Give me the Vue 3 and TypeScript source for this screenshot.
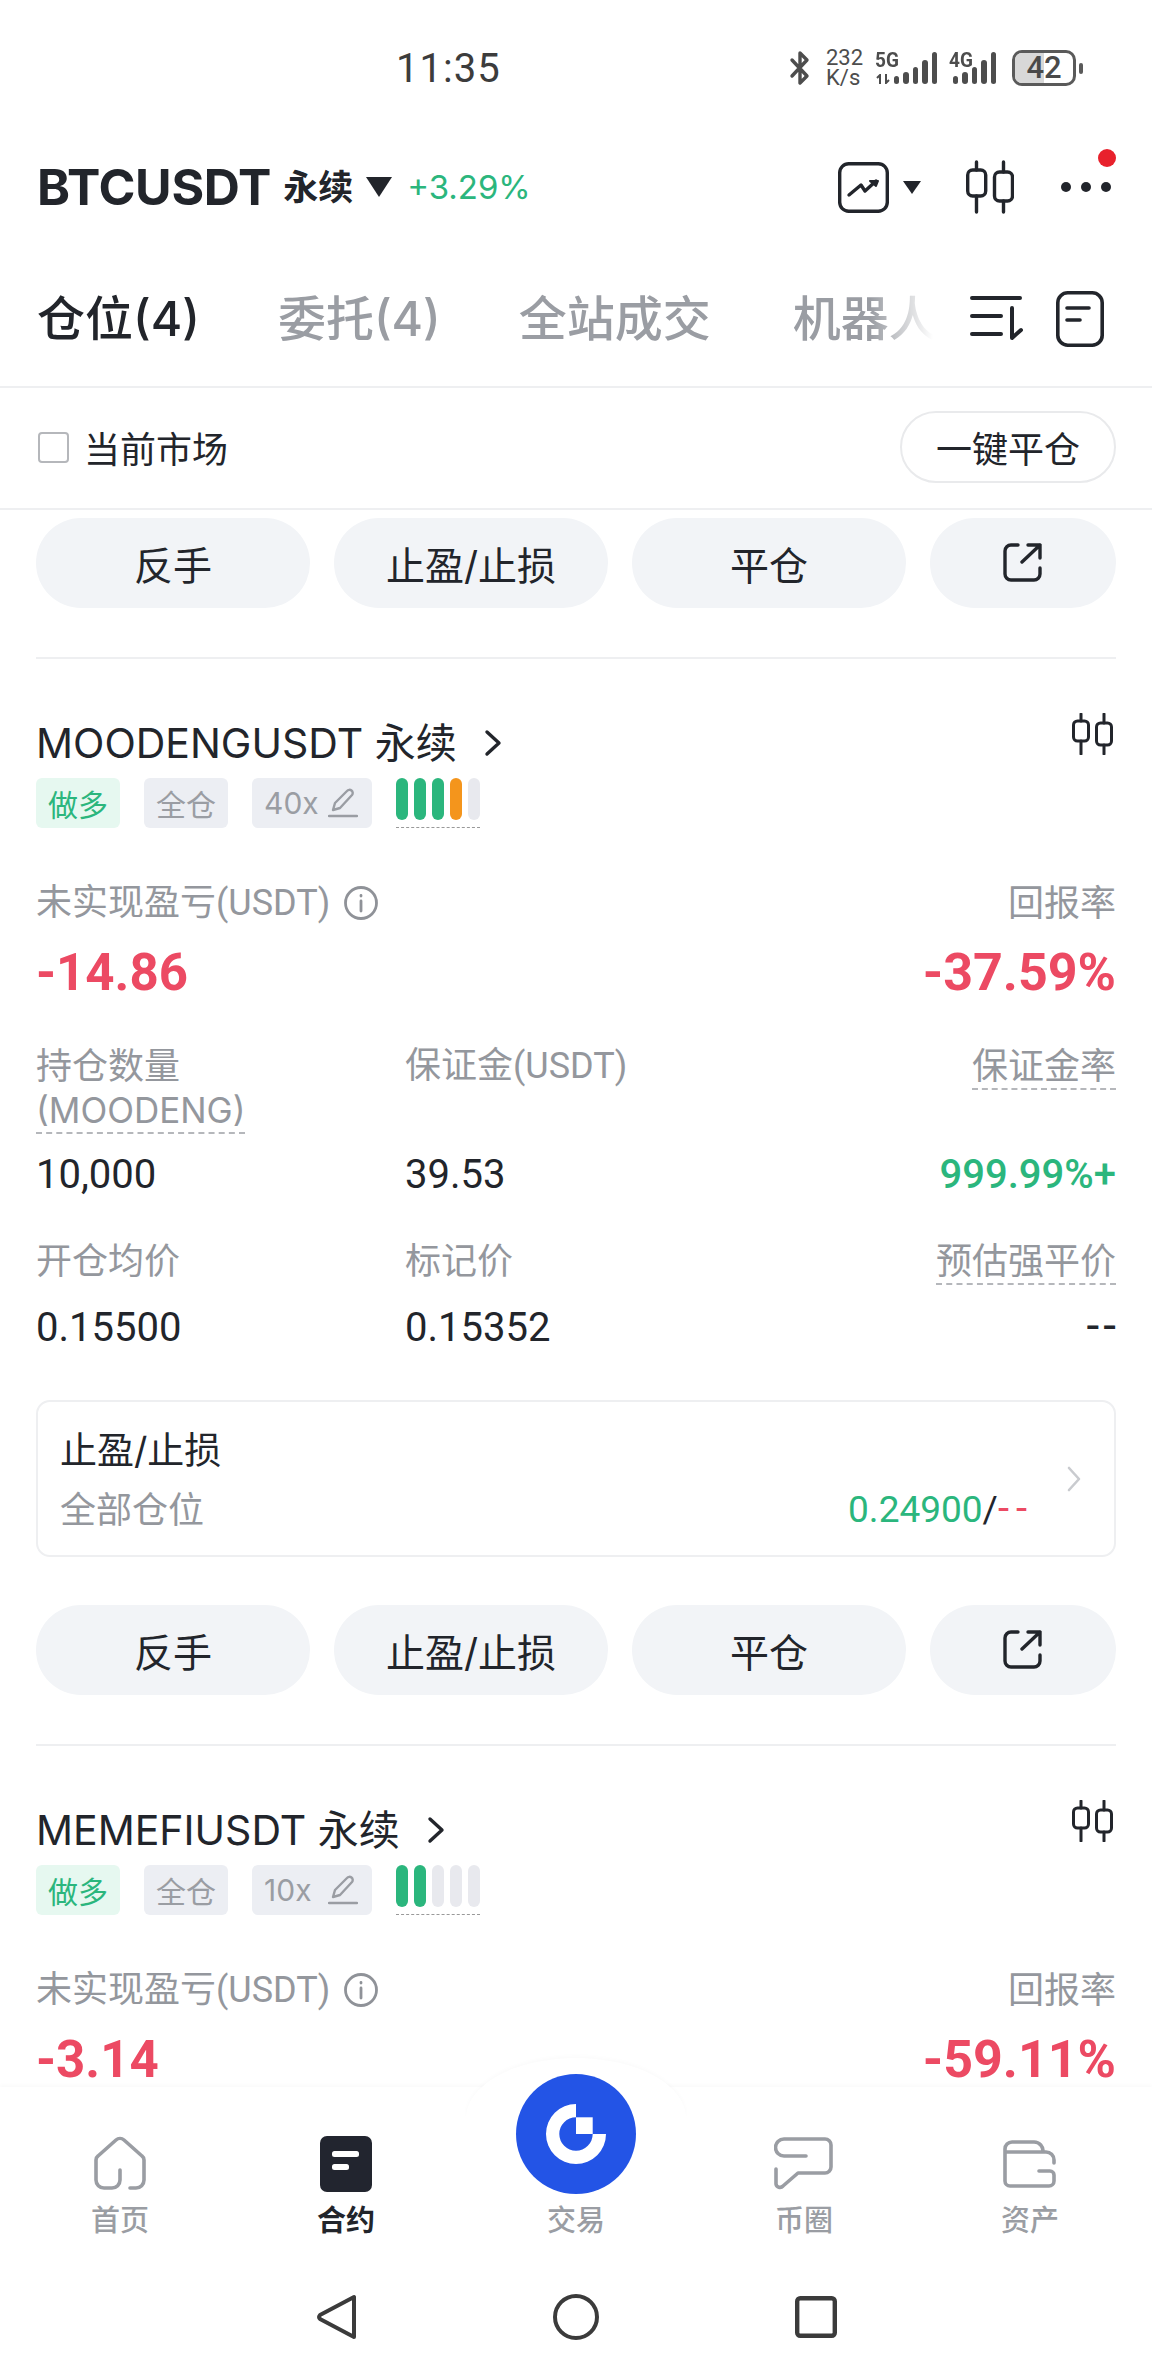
<script setup lang="ts">
// Futures positions screen: first action row is the tail of a scrolled-off card.
interface Position {
  symbol: string
  leverage: string
  pnl: string
  roe: string
  bars: string[]
}

const positions: Position[] = [
  { symbol: 'MOODENGUSDT', leverage: '40x', pnl: '-14.86', roe: '-37.59%', bars: ['g', 'g', 'g', 'o', 'e'] },
  { symbol: 'MEMEFIUSDT', leverage: '10x', pnl: '-3.14', roe: '-59.11%', bars: ['g', 'g', 'e', 'e', 'e'] },
]

const actions: string[] = ['反手', '止盈/止损', '平仓']
const tabs: string[] = ['仓位(4)', '委托(4)', '全站成交', '机器人']
const signal: number[] = [8, 12, 17, 24, 32]
</script>

<template>
  <div class="page">
    <div class="status">
      <span class="time">11:35</span>
      <div class="sys">
        <svg class="bt" width="22" height="36" viewBox="0 0 22 36"><path d="M3 10l15 16-7 7V3l7 7L3 26" fill="none" stroke="#4d4d4d" stroke-width="3.4" stroke-linejoin="round" stroke-linecap="round" /></svg>
        <div class="speed"><span>232</span><span>K/s</span></div>
        <div class="net">
          <span class="net-label">5G</span>
          <svg class="arrows" width="14" height="10" viewBox="0 0 14 10" fill="none" stroke="#4d4d4d" stroke-width="2"><path d="M4 10V1L1 4M10 0v9l3-3" /></svg>
          <div class="sig"><i v-for="(h, i) in signal" :key="i" :style="{ height: h + 'px' }"></i></div>
        </div>
        <div class="net net4">
          <span class="net-label">4G</span>
          <div class="sig"><i v-for="(h, i) in signal" :key="i" :style="{ height: h + 'px' }"></i></div>
        </div>
        <div class="batt"><div class="batt-fill"></div><span>42</span></div>
        <div class="batt-cap"></div>
      </div>
    </div>

    <div class="header">
      <span class="pair">BTCUSDT</span>
      <span class="perp">永续</span>
      <span class="tri"></span>
      <span class="chg">+3.29%</span>
      <div class="head-tools">
        <svg width="51" height="51" viewBox="0 0 51 51" fill="none" stroke="#22252b" stroke-width="3.4" stroke-linecap="round" stroke-linejoin="round"><rect x="1.7" y="1.7" width="47.6" height="47.6" rx="9" /><path d="M11 33l12-10 4 6 11-10" /><path d="M32 19h8l-2 5z" fill="#22252b" stroke-width="2" /></svg>
        <span class="tri tri-sm"></span>
        <svg class="cand" width="48" height="54" viewBox="0 0 48 54" fill="none" stroke="#22252b" stroke-width="3.4" stroke-linecap="round"><path d="M10.5 2v8M10.5 36v16M37.5 2v10M37.5 41v11" /><rect x="1.7" y="10" width="18" height="26" rx="5" /><rect x="28.5" y="12" width="18" height="29" rx="5" /></svg>
        <div class="more">
          <i></i><i></i><i></i>
          <span class="red-dot"></span>
        </div>
      </div>
    </div>

    <div class="tabs">
      <div class="tab-list">
        <span v-for="(t, i) in tabs" :key="t" class="tab" :class="{ on: i === 0 }">{{ t }}</span>
      </div>
      <svg class="sort" width="54" height="46" viewBox="0 0 54 46" fill="none" stroke="#22252b" stroke-width="4" stroke-linecap="round" stroke-linejoin="round"><path d="M2 3h48M2 21h29M2 39h29M42 13v30l9-8" /></svg>
      <svg class="doc" width="48" height="56" viewBox="0 0 48 56" fill="none" stroke="#22252b" stroke-width="3.6" stroke-linecap="round"><rect x="1.8" y="1.8" width="44.4" height="52.4" rx="10" /><path d="M11 17h22M11 29h13" /></svg>
    </div>

    <div class="filter">
      <span class="check"></span>
      <span class="filter-label">当前市场</span>
      <button class="close-all">一键平仓</button>
    </div>

    <div class="list">
      <div class="actions first">
        <button v-for="a in actions" :key="a" class="act">{{ a }}</button>
        <button class="act share">
          <svg width="40" height="40" viewBox="0 0 40 40" fill="none" stroke="#22252b" stroke-width="3.4" stroke-linecap="round" stroke-linejoin="round"><path d="M15 2H8a6 6 0 0 0-6 6v23a6 6 0 0 0 6 6h23a6 6 0 0 0 6-6v-6M19 19L37 2M25 2h12v13" /></svg>
        </button>
      </div>

      <div v-for="p in positions" :key="p.symbol" class="card">
        <div class="title-row">
          <span class="symbol">{{ p.symbol }} 永续</span>
          <svg class="chev" width="18" height="28" viewBox="0 0 18 28" fill="none" stroke="#22252b" stroke-width="3.4" stroke-linecap="round" stroke-linejoin="round"><path d="M3 3l12 11L3 25" /></svg>
          <svg class="cand-sm" width="41" height="42" viewBox="0 0 41 42" fill="none" stroke="#22252b" stroke-width="3" stroke-linecap="round"><path d="M9 1v7M9 28v13M32 1v9M32 32v9" /><rect x="1.5" y="8" width="15" height="20" rx="4" /><rect x="24.5" y="10" width="15" height="22" rx="4" /></svg>
        </div>
        <div class="tags">
          <span class="tag long">做多</span>
          <span class="tag">全仓</span>
          <span class="tag lev">
            {{ p.leverage }}
            <svg width="30" height="30" viewBox="0 0 30 30" fill="none" stroke="#9a9da3" stroke-width="2.4" stroke-linecap="round" stroke-linejoin="round"><path d="M1 28h28M5 22l2-7L19 3a3 3 0 0 1 5 4L12 20z" /></svg>
          </span>
          <span class="risk">
            <i v-for="(b, i) in p.bars" :key="i" :class="'bar-' + b"></i>
          </span>
        </div>

        <div class="pnl-row">
          <div>
            <div class="lbl with-info usdt">
              未实现盈亏(USDT)
              <svg width="36" height="36" viewBox="0 0 36 36" fill="none" stroke="#8f9298" stroke-width="2.8" stroke-linecap="round"><circle cx="18" cy="18" r="15.5" /><path d="M18 16v10M18 10.5v.6" /></svg>
            </div>
            <div class="pnl">{{ p.pnl }}</div>
          </div>
          <div class="right">
            <div class="lbl">回报率</div>
            <div class="pnl">{{ p.roe }}</div>
          </div>
        </div>

        <div class="grid">
          <div>
            <div class="lbl stack"><span>持仓数量</span><span class="dash moodeng">(MOODENG)</span></div>
            <div class="val">10,000</div>
          </div>
          <div>
            <div class="lbl stack usdt"><span>保证金(USDT)</span></div>
            <div class="val">39.53</div>
          </div>
          <div class="right">
            <div class="lbl stack"><span class="dash">保证金率</span></div>
            <div class="val green strong">999.99%+</div>
          </div>
          <div>
            <div class="lbl">开仓均价</div>
            <div class="val">0.15500</div>
          </div>
          <div>
            <div class="lbl">标记价</div>
            <div class="val">0.15352</div>
          </div>
          <div class="right">
            <div class="lbl"><span class="dash">预估强平价</span></div>
            <div class="val"><span class="dashes">--</span></div>
          </div>
        </div>

        <div class="tpsl">
          <div class="tpsl-body">
            <div class="tpsl-title">止盈/止损</div>
            <div class="tpsl-sub">
              <span class="lbl">全部仓位</span>
              <span class="tpsl-val"><span class="green">0.24900</span>/<span class="red dashes">--</span></span>
            </div>
          </div>
          <svg width="16" height="28" viewBox="0 0 16 28" fill="none" stroke="#c9cbcf" stroke-width="2.6" stroke-linecap="round" stroke-linejoin="round"><path d="M3 3l10 11L3 25" /></svg>
        </div>

        <div class="actions">
          <button v-for="a in actions" :key="a" class="act">{{ a }}</button>
          <button class="act share">
            <svg width="40" height="40" viewBox="0 0 40 40" fill="none" stroke="#22252b" stroke-width="3.4" stroke-linecap="round" stroke-linejoin="round"><path d="M15 2H8a6 6 0 0 0-6 6v23a6 6 0 0 0 6 6h23a6 6 0 0 0 6-6v-6M19 19L37 2M25 2h12v13" /></svg>
          </button>
        </div>
      </div>
    </div>

    <nav class="nav">
      <div class="nav-bump"></div>
      <div class="nav-item">
        <svg width="54" height="56" viewBox="0 0 54 56" fill="none" stroke="#9a9da3" stroke-width="3.6" stroke-linecap="round" stroke-linejoin="round"><path d="M27 34v10a8 8 0 0 1-8 8h-8a8 8 0 0 1-8-8V24a5 5 0 0 1 2-4L23 4a6 6 0 0 1 8 0l18 16a5 5 0 0 1 2 4v20a8 8 0 0 1-8 8h-6" /></svg>
        <span>首页</span>
      </div>
      <div class="nav-item on">
        <svg width="52" height="56" viewBox="0 0 52 56"><rect width="52" height="56" rx="7" fill="#22252f" /><rect x="12" y="15" width="27" height="6" rx="2.5" fill="#fff" /><rect x="12" y="28" width="17" height="6" rx="2.5" fill="#fff" /></svg>
        <span>合约</span>
      </div>
      <div class="nav-item trade">
        <div class="trade-btn">
          <svg width="62" height="62" viewBox="0 0 62 62"><path d="M31 1v13.3A16.7 16.7 0 1 0 47.7 31H61A30 30 0 1 1 31 1z" fill="#fff" /><rect x="31" y="14.3" width="16.7" height="16.7" fill="#fff" /></svg>
        </div>
        <span>交易</span>
      </div>
      <div class="nav-item">
        <svg width="60" height="56" viewBox="0 -1 60 56" fill="none" stroke="#9a9da3" stroke-width="3.6" stroke-linecap="round" stroke-linejoin="round"><path d="M32 19H10a8.500 8.500 0 0 1 0-17h41a6 6 0 0 1 6 6v22a6 6 0 0 1-6 6H24L9 49a4 4 0 0 1-7-2V32" /></svg>
        <span>币圈</span>
      </div>
      <div class="nav-item">
        <svg width="54" height="56" viewBox="0 -4 54 56" fill="none" stroke="#9a9da3" stroke-width="3.6" stroke-linecap="round" stroke-linejoin="round"><path d="M36 31h11a4 4 0 0 1 4 4v6a5 5 0 0 1-5 5H7a5 5 0 0 1-5-5V9a7 7 0 0 1 7-7h22a9 9 0 0 1 9 10M2 12h41a8 8 0 0 1 8 8v3" /></svg>
        <span>资产</span>
      </div>
    </nav>

    <div class="sysnav">
      <svg width="41" height="46" viewBox="0 0 41 46" fill="none" stroke="#3b3b3b" stroke-width="4" stroke-linejoin="round"><path d="M38 3v40L4 25a3 3 0 0 1 0-4z" /></svg>
      <svg width="46" height="46" viewBox="0 0 46 46" fill="none" stroke="#3b3b3b" stroke-width="4"><circle cx="23" cy="23" r="21" /></svg>
      <svg width="42" height="42" viewBox="0 0 42 42" fill="none" stroke="#3b3b3b" stroke-width="4.4"><rect x="2.200" y="2.200" width="37.600" height="37.600" rx="3" /></svg>
    </div>
  </div>
</template>

<style>
html, body { margin: 0; background: #fff; }
</style>

<style scoped>
.page {
  width: 1152px;
  height: 2376px;
  overflow: hidden;
  display: flex;
  flex-direction: column;
  background: #fff;
  color: #22252b;
  font-family: Inter, "Noto Sans CJK SC", sans-serif;
}
button { font-family: inherit; border: none; padding: 0; color: inherit; }

.status {
  height: 136px;
  flex: none;
  position: relative;
  display: flex;
  align-items: center;
  justify-content: flex-end;
  padding-right: 69px;
}
.time {
  position: absolute;
  left: 396px;
  top: 45px;
  font: 40px/48px Roboto, sans-serif;
  letter-spacing: 1px;
  color: #3c3c3c;
}
.sys { display: flex; align-items: center; color: #4d4d4d; }
.bt { margin-right: 15px; }
.speed { display: flex; flex-direction: column; font: 22px/20px Roboto, sans-serif; width: 36px; margin-right: 13px; }
.net { position: relative; width: 62px; height: 32px; margin-right: 12px; }
.net-label {
  position: absolute;
  left: 0;
  top: -1px;
  font: 700 20px/18px Roboto, sans-serif;
  transform: scaleX(0.95);
  transform-origin: 0 0;
}
.arrows { position: absolute; left: 1px; bottom: 0; }
.sig { position: absolute; right: 0; bottom: 0; display: flex; align-items: flex-end; gap: 4px; }
.sig i { width: 5.5px; border-radius: 3px; background: #4d4d4d; }
.net4 { width: 47px; margin-right: 16px; }
.batt {
  position: relative;
  width: 64px;
  height: 36px;
  box-sizing: border-box;
  border: 3px solid #5a5a5a;
  border-radius: 10px;
  overflow: hidden;
  display: flex;
  align-items: center;
  justify-content: center;
}
.batt-fill { position: absolute; left: 0; top: 0; bottom: 0; width: 50%; background: #d8d8d8; }
.batt span { position: relative; font: 500 31px/30px Roboto, sans-serif; color: #4a4a4a; }
.batt-cap { width: 4px; height: 11px; background: #5a5a5a; border-radius: 2px; margin-left: 3px; }

.header {
  height: 102px;
  flex: none;
  display: flex;
  align-items: center;
  padding: 0 41px 0 37px;
}
.pair { font-size: 50px; font-weight: 700; letter-spacing: -0.3px; }
.perp { font-size: 35px; font-weight: 700; margin-left: 12px; margin-bottom: 6px; }
.tri {
  width: 0;
  height: 0;
  margin-left: 13px;
  border-left: 13px solid transparent;
  border-right: 13px solid transparent;
  border-top: 20px solid #22252b;
}
.tri-sm { margin-left: 14px; border-left-width: 9px; border-right-width: 9px; border-top-width: 13px; }
.chg { margin-left: 15px; font-size: 33px; color: #2bb67d; }
.head-tools { margin-left: auto; display: flex; align-items: center; }
.cand { margin-left: 45px; }
.more { position: relative; display: flex; gap: 10px; margin-left: 47px; }
.more i { width: 10px; height: 10px; border-radius: 50%; background: #22252b; }
.red-dot { position: absolute; right: -5px; top: -33px; width: 18px; height: 18px; border-radius: 50%; background: #e8212c; }

.tabs {
  height: 150px;
  flex: none;
  box-sizing: border-box;
  display: flex;
  align-items: center;
  padding: 12px 48px 0 37px;
  border-bottom: 2px solid #eeeff1;
}
.tab-list {
  width: 896px;
  flex: none;
  display: flex;
  gap: 78px;
  margin-bottom: 6px;
  overflow: hidden;
  white-space: nowrap;
  -webkit-mask-image: linear-gradient(to right, #000 93%, transparent 100%);
  mask-image: linear-gradient(to right, #000 93%, transparent 100%);
}
.tab { font-size: 48px; color: #9a9da3; font-weight: 500; }
.tab.on { color: #22252b; }
.tab:last-child { margin-left: 4px; }
.sort { margin-left: 37px; margin-right: auto; }
.doc { margin-top: 2px; }

.filter {
  height: 122px;
  flex: none;
  box-sizing: border-box;
  display: flex;
  align-items: center;
  padding: 0 36px 2px 38px;
  border-bottom: 2px solid #eeeff1;
}
.check { width: 31px; height: 31px; box-sizing: border-box; border: 2.5px solid #b5b7bb; border-radius: 4px; }
.filter-label { font-size: 36px; margin-left: 15px; }
.close-all {
  margin-left: auto;
  width: 216px;
  height: 72px;
  border: 2px solid #e9eaec;
  border-radius: 36px;
  background: #fff;
  font-size: 36px;
}

.list { flex: 1; min-height: 0; overflow: hidden; padding: 8px 36px 0; }
.actions { display: flex; gap: 24px; }
.act {
  flex: 1;
  height: 90px;
  border-radius: 45px;
  background: #f2f4f7;
  font-size: 39px;
  display: flex;
  align-items: center;
  justify-content: center;
}
.share { flex: none; width: 186px; }
.card { border-top: 2px solid #eeeff1; margin-top: 49px; padding-top: 60px; }
.title-row { display: flex; align-items: center; height: 48px; }
.symbol { font-size: 41px; line-height: 48px; }
.chev { margin-left: 27px; }
.cand-sm { margin-left: auto; margin-right: 3px; margin-top: -18px; }
.tags { display: flex; align-items: flex-start; gap: 24px; margin-top: 11px; }
.tag {
  height: 50px;
  box-sizing: border-box;
  padding: 0 12px;
  display: inline-flex;
  align-items: center;
  border-radius: 6px;
  background: #eceef3;
  color: #9a9da3;
  font-size: 30px;
}
.lev { width: 120px; justify-content: space-between; padding-right: 14px; }
.long { background: #e6f8f0; color: #2bb67d; }
.risk {
  display: inline-flex;
  gap: 6px;
  padding-bottom: 7px;
  border-bottom: 1px dashed #999;
}
.risk i { width: 12px; height: 42px; border-radius: 6px; }
.bar-g { background: #2bb67d; }
.bar-o { background: #f4951c; }
.bar-e { background: #e8e9ee; }

.pnl-row { display: flex; justify-content: space-between; margin-top: 53px; }
.lbl { font-size: 36px; line-height: 44px; color: #94979d; }
.usdt { font-family: Roboto, "Noto Sans CJK SC", sans-serif; }
.with-info { display: flex; align-items: center; gap: 13px; }
.pnl { font-family: Roboto, sans-serif; font-size: 51px; line-height: 56px; font-weight: 700; color: #ec4a63; margin-top: 20px; }
.right .pnl { font-size: 52px; }
.right { text-align: right; }

.grid { display: grid; grid-template-columns: 369px 1fr 1fr; margin-top: 43px; row-gap: 42px; }
.grid > div > .lbl { height: 44px; }
.grid > div > .stack { display: flex; flex-direction: column; align-items: flex-start; height: 86px; white-space: nowrap; }
.grid > .right > .stack { align-items: flex-end; }
.dash { display: inline-block; vertical-align: top; line-height: 44px; border-bottom: 2px dashed #b5b7bb; }
.moodeng { font-size: 35px; }
.val { font-family: Roboto, sans-serif; font-size: 40px; line-height: 44px; margin-top: 23px; }
.strong { font-weight: 500; }
.dashes { font-size: 46px; line-height: 0; letter-spacing: 4px; margin-right: -4px; }
.green { color: #2bb67d; }
.red { color: #ec4a63; }

.tpsl {
  display: flex;
  align-items: center;
  box-sizing: border-box;
  height: 157px;
  margin-top: 50px;
  padding: 0 32px 0 22px;
  border: 2px solid #eeeff1;
  border-radius: 14px;
}
.tpsl-body { flex: 1; padding-top: 4px; }
.tpsl-title { font-size: 37px; line-height: 44px; }
.tpsl-sub { display: flex; justify-content: space-between; margin-top: 15px; padding-right: 32px; align-items: center; }
.tpsl-val { font-family: Roboto, sans-serif; font-size: 37px; line-height: 44px; white-space: nowrap; }
.tpsl-val .dashes { font-size: 40px; letter-spacing: 7px; margin-right: 0; }
.tpsl + .actions { margin-top: 48px; }

.nav {
  flex: none;
  height: 170px;
  position: relative;
  display: grid;
  grid-template-columns: 240px 212px 248px 208px 244px;
  background: #fff;
  box-shadow: 0 -2px 4px rgba(0, 0, 0, 0.025);
  padding-top: 49px;
  box-sizing: border-box;
}
.nav-bump {
  position: absolute;
  left: 466px;
  top: -29px;
  width: 220px;
  height: 60px;
  border-radius: 50% 50% 0 0 / 100% 100% 0 0;
  background: #fff;
  box-shadow: 0 -2px 4px rgba(0, 0, 0, 0.02);
}
.nav-item {
  position: relative;
  display: flex;
  flex-direction: column;
  align-items: center;
  gap: 13px;
  font-size: 29px;
  line-height: 32px;
  color: #9a9da3;
  font-weight: 500;
}
.nav-item svg { flex: none; }
.nav-item.on { color: #22252b; font-weight: 700; }
.trade span { margin-top: 69px; }
.trade-btn {
  position: absolute;
  top: -62px;
  left: 64px;
  width: 120px;
  height: 120px;
  border-radius: 50%;
  background: #2354e6;
  display: flex;
  align-items: center;
  justify-content: center;
}
.sysnav {
  flex: none;
  height: 119px;
  display: grid;
  grid-template-columns: 240px 240px 240px;
  justify-content: center;
  justify-items: center;
  align-items: center;
  background: #fff;
}
</style>
